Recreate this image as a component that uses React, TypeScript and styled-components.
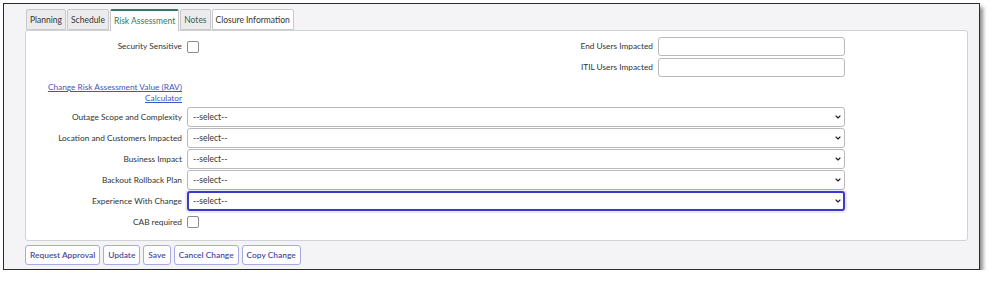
import React from 'react';
import styled, { createGlobalStyle } from 'styled-components';
import { ChevronDown } from 'lucide-react';

const GlobalStyle = createGlobalStyle`
  body {
    margin: 0;
    background: #ffffff;
    font-family: Lato, "Liberation Sans", sans-serif;
    font-size: 8.3px;
    color: #333;
  }
`;

const Frame = styled.div`
  margin: 3px 0 0 3px;
  width: 977px;
  height: 267px;
  border: 1px solid #2b2b2b;
  background: #f4f4f6;
  box-shadow: 3px 4px 4px rgba(0, 0, 0, 0.45);
  padding: 5px 11px 4px 21px;
  box-sizing: border-box;
`;

const TabBar = styled.div`
  display: flex;
  gap: 1px;
  margin-left: 1px;
  height: 21px;
  position: relative;
  z-index: 1;
`;

const Tab = styled.div<{ $active?: boolean; $tone?: 'gray' | 'white' | 'green' }>`
  display: flex;
  align-items: center;
  padding: 0 3px;
  font-size: 8.5px;
  height: ${(p) => (p.$active ? '22px' : '21px')};
  box-sizing: border-box;
  border: 1px solid #c9c9cc;
  border-bottom: ${(p) => (p.$active ? 'none' : '1px solid #c9c9cc')};
  border-top: ${(p) => (p.$active ? '2px solid #2f7d5e' : '1px solid #c9c9cc')};
  border-radius: 2px 2px 0 0;
  background: ${(p) => (p.$active || p.$tone === 'white' ? '#ffffff' : '#ebebee')};
  color: ${(p) => (p.$active ? '#2f7d5e' : p.$tone === 'green' ? '#3c5e4c' : '#333')};
  white-space: nowrap;
`;

const Panel = styled.div`
  background: #ffffff;
  border: 1px solid #d2d2d6;
  border-radius: 3px;
  padding: 6px 0 8px 0;
`;

const TopGrid = styled.div`
  display: grid;
  grid-template-columns: 156px 300px 161px 187px;
  column-gap: 5px;
  row-gap: 2px;
  align-items: center;
`;

const Label = styled.label`
  text-align: right;
  color: #333;
  line-height: 11px;
`;

const TextInput = styled.input`
  height: 19px;
  box-sizing: border-box;
  border: 1px solid #b9b9bd;
  border-radius: 3px;
  background: #fff;
  margin: 0;
`;

const Checkbox = styled.span`
  display: block;
  width: 10px;
  height: 10px;
  border: 1px solid #8c8c90;
  border-radius: 2px;
  background: #fff;
`;

const LinkRow = styled.div`
  display: grid;
  grid-template-columns: 156px;
  margin-top: 5px;
  margin-bottom: 3px;
`;

const CalcLink = styled.a`
  text-align: right;
  color: #3b56c9;
  text-decoration: underline;
  line-height: 11px;
  cursor: pointer;
`;

const SelectList = styled.div`
  display: flex;
  flex-direction: column;
  gap: 1px;
`;

const FieldRow = styled.div`
  display: grid;
  grid-template-columns: 156px 658px;
  column-gap: 5px;
  align-items: center;
  height: 20px;
`;

const SelectWrap = styled.div`
  position: relative;
  height: 20px;
`;

const Select = styled.select<{ $focused?: boolean }>`
  appearance: none;
  width: 100%;
  height: 20px;
  box-sizing: border-box;
  margin: 0;
  padding: 0 0 0 ${(p) => (p.$focused ? '4px' : '5px')};
  font-family: Lato, "Liberation Sans", sans-serif;
  font-size: 8.5px;
  color: #333;
  background: #fff;
  border: ${(p) => (p.$focused ? '2px solid #3a3acb' : '1px solid #b9b9bd')};
  border-radius: 3px;
  box-shadow: ${(p) => (p.$focused ? '0 0 0 2px rgba(70, 70, 210, 0.12)' : 'none')};
  outline: none;
`;

const Chevron = styled.span`
  position: absolute;
  right: 3px;
  top: 6px;
  display: flex;
  color: #222;
  pointer-events: none;
`;

const ButtonBar = styled.div`
  display: flex;
  gap: 3px;
  margin-top: 4px;
`;

const Button = styled.button`
  height: 20px;
  padding: 0 4px;
  font-family: Lato, "Liberation Sans", sans-serif;
  font-size: 8.4px;
  font-weight: 600;
  color: #4a4aa6;
  background: #fff;
  border: 1px solid #a9a9e4;
  border-radius: 3px;
`;

const tabs = [
  { name: 'Planning' },
  { name: 'Schedule' },
  { name: 'Risk Assessment', active: true },
  { name: 'Notes', tone: 'green' as const },
  { name: 'Closure Information', tone: 'white' as const },
];

const selects = [
  'Outage Scope and Complexity',
  'Location and Customers Impacted',
  'Business Impact',
  'Backout Rollback Plan',
  'Experience With Change',
];

const buttons = ['Request Approval', 'Update', 'Save', 'Cancel Change', 'Copy Change'];

const App = () => {
  return (
    <>
      <GlobalStyle />
      <Frame>
        <TabBar>
          {tabs.map((t) => (
            <Tab key={t.name} $active={t.active} $tone={t.tone}>
              {t.name}
            </Tab>
          ))}
        </TabBar>
        <Panel>
          <TopGrid>
            <Label>Security Sensitive</Label>
            <Checkbox />
            <Label>End Users Impacted</Label>
            <TextInput />
            <span />
            <span />
            <Label>ITIL Users Impacted</Label>
            <TextInput />
          </TopGrid>
          <LinkRow>
            <CalcLink>
              Change Risk Assessment Value (RAV)
              <br />
              Calculator
            </CalcLink>
          </LinkRow>
          <SelectList>
            {selects.map((name, i) => (
              <FieldRow key={name}>
                <Label>{name}</Label>
                <SelectWrap>
                  <Select $focused={i === selects.length - 1} defaultValue="">
                    <option value="">--select--</option>
                  </Select>
                  <Chevron>
                    <ChevronDown size={8} strokeWidth={3.5} />
                  </Chevron>
                </SelectWrap>
              </FieldRow>
            ))}
            <FieldRow>
              <Label>CAB required</Label>
              <Checkbox />
            </FieldRow>
          </SelectList>
        </Panel>
        <ButtonBar>
          {buttons.map((b) => (
            <Button key={b}>{b}</Button>
          ))}
        </ButtonBar>
      </Frame>
    </>
  );
};

export default App;
